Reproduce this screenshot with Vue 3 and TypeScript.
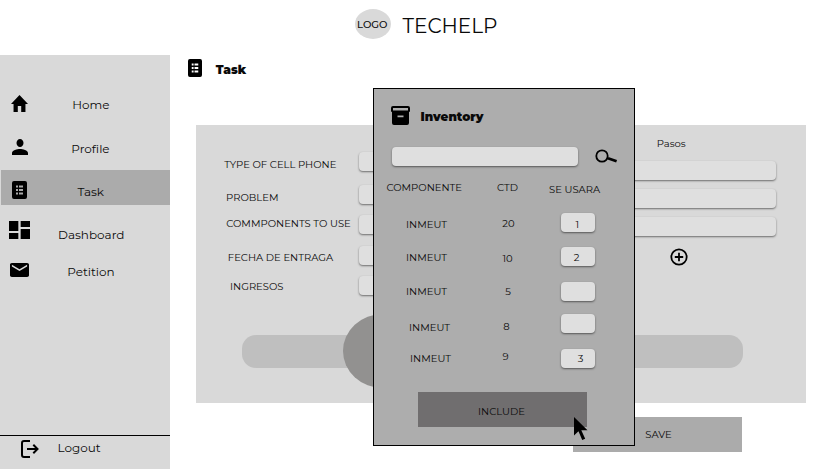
<script setup lang="ts">
import { h } from 'vue'

interface LabelProps {
  text: string
  w: number
  size?: number
  weight?: number
  dx?: number
  dy?: number
}

// Single-line caption, centred in a box as tall as its capitals.
const Label = (p: LabelProps) => {
  const size = p.size ?? 10
  const cap = Math.round(size * 0.7)
  return h('svg', { class: 'label', width: p.w, height: cap }, [
    h('text', {
      x: p.w / 2 + (p.dx ?? 0),
      y: cap + (p.dy ?? 0),
      'font-size': size,
      'font-weight': p.weight ?? 400,
      'text-anchor': 'middle',
    }, p.text),
  ])
}
Label.props = ['text', 'w', 'size', 'weight', 'dx', 'dy']

const menu = [
  { key: 'home', text: 'Home', w: 36.5, dy: 0, box: '2 3 20 17', iw: 17, ih: 17, path: 'M10 20v-6h4v6h5v-8h3L12 3 2 12h3v8z' },
  { key: 'profile', text: 'Profile', w: 37.5, dy: -0.2, box: '4 4 16 16', iw: 16, ih: 16, path: 'M12 12c2 0 3.500-1.800 3.500-4S14 4 12 4 8.500 5.800 8.500 8s1.500 4 3.500 4zm0 2c-2.700 0-8 1.300-8 4v2h16v-2c0-2.700-5.300-4-8-4z' },
  { key: 'task', text: 'Task', w: 26, dy: 3.8, box: '0 0 15 18', iw: 15, ih: 18, path: '' },
  { key: 'dashboard', text: 'Dashboard', w: 65, dy: 5, box: '3 3 18 18', iw: 21, ih: 18, path: 'M3 13h8V3H3v10zm0 8h8v-6H3v6zm10 0h8V11h-8v10zm0-18v6h8V3h-8z' },
  { key: 'petition', text: 'Petition', w: 46.5, dy: 2, box: '2 4 20 16', iw: 19, ih: 14, path: 'M20 4H4c-1.100 0-2 .9-2 2v12c0 1.100.9 2 2 2h16c1.100 0 2-.9 2-2V6c0-1.100-.9-2-2-2zm0 4-8 5-8-5V6l8 5 8-5v2z' },
]

const fields = [
  { text: 'TYPE OF CELL PHONE', w: 112, dx: 0.3, dy: 3, gap: 14 },
  { text: 'PROBLEM', w: 52, dx: 2.3, dy: 3, gap: 11 },
  { text: 'COMMPONENTS TO USE', w: 125, dx: 2, dy: -1, gap: 12 },
  { text: 'FECHA DE ENTRAGA', w: 105, dx: 4, dy: 2, gap: 11 },
  { text: 'INGRESOS', w: 53.5, dx: 6, dy: 1, gap: 0 },
]

const stock = [
  { name: 'INMEUT', nx: -0.5, ny: 2, ctd: '20', cw: 12, cx: 0.5, cy: 1, use: '1', uw: 3.5, ux: -0.5, uy: 2, gap: 15 },
  { name: 'INMEUT', nx: -0.5, ny: 1, ctd: '10', cw: 10, cx: -0.5, cy: 2, use: '2', uw: 6, ux: -1.5, uy: 1, gap: 16 },
  { name: 'INMEUT', nx: -0.5, ny: 0, ctd: '5', cw: 5.7, cx: 0.3, cy: 0, use: '', uw: 0, ux: 0, uy: 0, gap: 13 },
  { name: 'INMEUT', nx: 2.5, ny: 4, ctd: '8', cw: 6, cx: -1.5, cy: 3, use: '', uw: 0, ux: 0, uy: 0, gap: 16 },
  { name: 'INMEUT', nx: 3.5, ny: 0, ctd: '9', cw: 6, cx: -2.5, cy: -2, use: '3', uw: 6, ux: 2.5, uy: 0, gap: 0 },
]

const sheetPath = 'M2 0h11a2 2 0 0 1 2 2v14a2 2 0 0 1-2 2H2a2 2 0 0 1-2-2V2a2 2 0 0 1 2-2zM4 4.500v2h2v-2zM7 4.500v2h4v-2zM4 8v2h2V8zM7 8v2h4V8zM4 11.500v2h2v-2zM7 11.500v2h4v-2z'
</script>

<template>
  <div class="app">
    <header class="top">
      <div class="logo"><Label text="LOGO" :w="29.5" :dx="-0.5" :weight="500" /></div>
      <Label class="brand" text="TECHELP" :w="94" :size="20" />
    </header>

    <div class="body">
      <aside class="side">
        <nav class="menu">
          <a v-for="m in menu" :key="m.key" class="item" :class="m.key">
            <span class="icon">
              <svg :width="m.iw" :height="m.ih" :viewBox="m.box" preserveAspectRatio="none">
                <path :d="m.path || sheetPath" fill-rule="evenodd" />
              </svg>
            </span>
            <span class="name"><Label :text="m.text" :w="m.w" :size="12" :dx="-0.3" :dy="m.dy" /></span>
          </a>
        </nav>
        <a class="logout">
          <svg width="18" height="18" viewBox="0 0 18 18" fill="none" stroke="#000" stroke-width="2">
            <path d="M9 1H3Q1 1 1 3v12q0 2 2 2h6M6 9h10.500M12.300 4.800 16.500 9l-4.200 4.200" />
          </svg>
          <Label text="Logout" :w="42" :size="12" />
        </a>
      </aside>

      <main class="main">
        <div class="title">
          <svg width="14" height="18" viewBox="0 0 15 18" preserveAspectRatio="none">
            <path :d="sheetPath" fill-rule="evenodd" />
          </svg>
          <Label text="Task" :w="30" :size="12" :weight="900" :dy="-0.2" />
        </div>

        <section class="card">
          <div class="columns">
            <div class="form">
              <div v-for="f in fields" :key="f.text" class="row" :style="{ marginBottom: f.gap + 'px' }">
                <span class="caption"><Label :text="f.text" :w="f.w" :dx="f.dx" :dy="f.dy" /></span>
                <div class="field"></div>
              </div>
            </div>
            <div class="steps">
              <Label text="Pasos" :w="28.5" class="steps-title" />
              <div v-for="n in 3" :key="n" class="field"></div>
              <svg class="add" width="18" height="18" viewBox="0 0 18 18" fill="none" stroke="#000" stroke-width="1.8">
                <circle cx="9" cy="9" r="7.700" />
                <path d="M9 4.800v8.400M4.800 9h8.400" />
              </svg>
            </div>
          </div>
          <div class="track"><div class="knob"></div></div>
        </section>

        <button class="save"><Label text="SAVE" :w="26" :dx="0.5" /></button>
      </main>
    </div>

    <section class="modal">
      <div class="modal-title">
        <svg width="19" height="19" viewBox="0 0 19 19">
          <path fill-rule="evenodd" d="M2 0h15a2 2 0 0 1 2 2v3q0 1-1 1v11a2 2 0 0 1-2 2H3a2 2 0 0 1-2-2V6Q0 6 0 5V2a2 2 0 0 1 2-2zM2 2v2.500h15V2zM6.500 9.500v1.800h6V9.500z" />
        </svg>
        <Label text="Inventory" :w="63" :size="12" :weight="900" :dx="-0.5" :dy="0.8" />
      </div>
      <div class="search">
        <div class="field"></div>
        <svg width="23" height="15" viewBox="0 0 23 15" fill="none" stroke="#000">
          <circle cx="7" cy="7" r="5.700" stroke-width="1.800" />
          <path d="M13 9.300 21.600 12.300" stroke-width="2.800" />
        </svg>
      </div>
      <div class="grid head">
        <Label text="COMPONENTE" :w="75" :dx="-2.3" />
        <Label text="CTD" :w="20.5" :dx="-0.7" />
        <Label text="SE USARA" :w="50.5" :dx="-3.7" :dy="2" />
      </div>
      <div v-for="(s, i) in stock" :key="i" class="grid" :style="{ marginBottom: s.gap + 'px' }">
        <Label :text="s.name" :w="40" :dx="s.nx" :dy="s.ny" />
        <Label :text="s.ctd" :w="s.cw" :dx="s.cx" :dy="s.cy" />
        <div class="field"><Label v-if="s.use" :text="s.use" :w="s.uw" :dx="s.ux" :dy="s.uy" /></div>
      </div>
      <button class="include">
        <Label text="INCLUDE" :w="46.5" :dx="-0.8" :dy="2" />
        <svg class="cursor" width="14" height="24" viewBox="0 0 14 24">
          <path d="M0 0v18.500l4.500-4.200 3.700 8.700 3-1.200-3.900-8.600H13.500z" />
        </svg>
      </button>
    </section>
  </div>
</template>

<style>
body {
  background: #fff;
}
.label {
  display: block;
  flex: none;
  overflow: visible;
  font-family: Montserrat, Inter, sans-serif;
  fill: #0a0a0a;
}
</style>

<style scoped>
.app {
  position: relative;
  display: flex;
  flex-direction: column;
  width: 834px;
  height: 469px;
  overflow: hidden;
}
button {
  padding: 0;
  border: 0;
}
.top {
  display: flex;
  align-items: flex-start;
  box-sizing: border-box;
  height: 55px;
  padding: 9px 0 0 355px;
}
.logo {
  display: flex;
  align-items: center;
  justify-content: center;
  width: 36px;
  height: 30px;
  border-radius: 50%;
  background: #d9d9d9;
}
.brand {
  margin: 10px 0 0 12px;
}
.body {
  display: flex;
  flex: 1;
}
.side {
  display: flex;
  flex-direction: column;
  justify-content: space-between;
  width: 170px;
  background: #d9d9d9;
}
.menu {
  display: flex;
  flex-direction: column;
  padding-top: 28px;
}
.item {
  display: grid;
  grid-template-columns: 39px 104px;
  align-items: center;
  height: 43px;
}
.icon,
.name {
  display: flex;
  justify-content: center;
}
.home {
  height: 44px;
}
.home .icon,
.profile .icon {
  padding-bottom: 3px;
}
.task {
  grid-template-columns: 37px 106px;
  height: 35px;
  margin-left: 1px;
  background: #ababab;
}
.task .icon {
  padding-top: 5px;
}
.dashboard {
  height: 50px;
}
.petition {
  height: 30px;
}
.logout {
  display: flex;
  align-items: flex-start;
  gap: 19px;
  height: 29px;
  padding: 4px 0 0 20.500px;
  border-top: 1px solid #000;
}
.logout .label {
  margin-top: 4px;
}
.main {
  display: flex;
  flex: 1;
  flex-direction: column;
}
.title {
  display: flex;
  align-items: center;
  gap: 14px;
  height: 18px;
  padding: 4px 0 0 17.700px;
}
.title .label {
  margin-top: 3px;
}
.card {
  box-sizing: border-box;
  width: 610px;
  height: 278px;
  margin: 48px 0 0 26px;
  padding: 15px 30px 0 28px;
  background: #d9d9d9;
}
.columns {
  display: flex;
  justify-content: space-between;
  height: 195px;
}
.form {
  padding-top: 12px;
}
.row {
  display: flex;
  align-items: center;
}
.caption {
  width: 135px;
}
.field {
  width: 186px;
  height: 19px;
  border-radius: 4px;
  background: #dfdfdf;
  box-shadow: 0 1px 2px rgba(0, 0, 0, 0.5);
}
.steps {
  display: flex;
  flex-direction: column;
  align-items: center;
  gap: 9px;
  width: 208px;
}
.steps .field {
  width: 208px;
}
.steps-title {
  margin: 0 0 5px -1px;
}
.add {
  margin: 3px 0 0 14px;
}
.track {
  display: flex;
  align-items: center;
  width: 501px;
  height: 33px;
  margin-left: 18px;
  border-radius: 14px;
  background: #bfbfbf;
}
.knob {
  flex: none;
  width: 80px;
  height: 74px;
  margin: 0 0 1px 101px;
  border-radius: 50%;
  background: #929190;
}
.save,
.include {
  display: flex;
  align-items: center;
  justify-content: center;
  width: 169px;
  height: 35px;
}
.save {
  margin: 14px 0 0 403px;
  background: #ababab;
}
.modal {
  position: absolute;
  top: 88px;
  left: 373px;
  box-sizing: border-box;
  width: 262px;
  height: 358px;
  border: 1px solid #000;
  background: #adadad;
}
.modal-title {
  display: flex;
  align-items: center;
  gap: 10.500px;
  padding: 17px 0 0 17px;
}
.search {
  display: flex;
  align-items: center;
  gap: 17px;
  padding: 22px 0 0 18px;
}
.grid {
  display: grid;
  grid-template-columns: 105px 58px 82px;
  align-items: center;
  justify-items: center;
}
.head {
  padding: 18px 0 22px;
}
.grid .field {
  display: flex;
  align-items: center;
  justify-content: center;
  width: 34px;
}
.include {
  position: relative;
  margin: 24px 0 0 44px;
  background: #706e6f;
}
.cursor {
  position: absolute;
  top: 25px;
  left: 156px;
}
</style>
